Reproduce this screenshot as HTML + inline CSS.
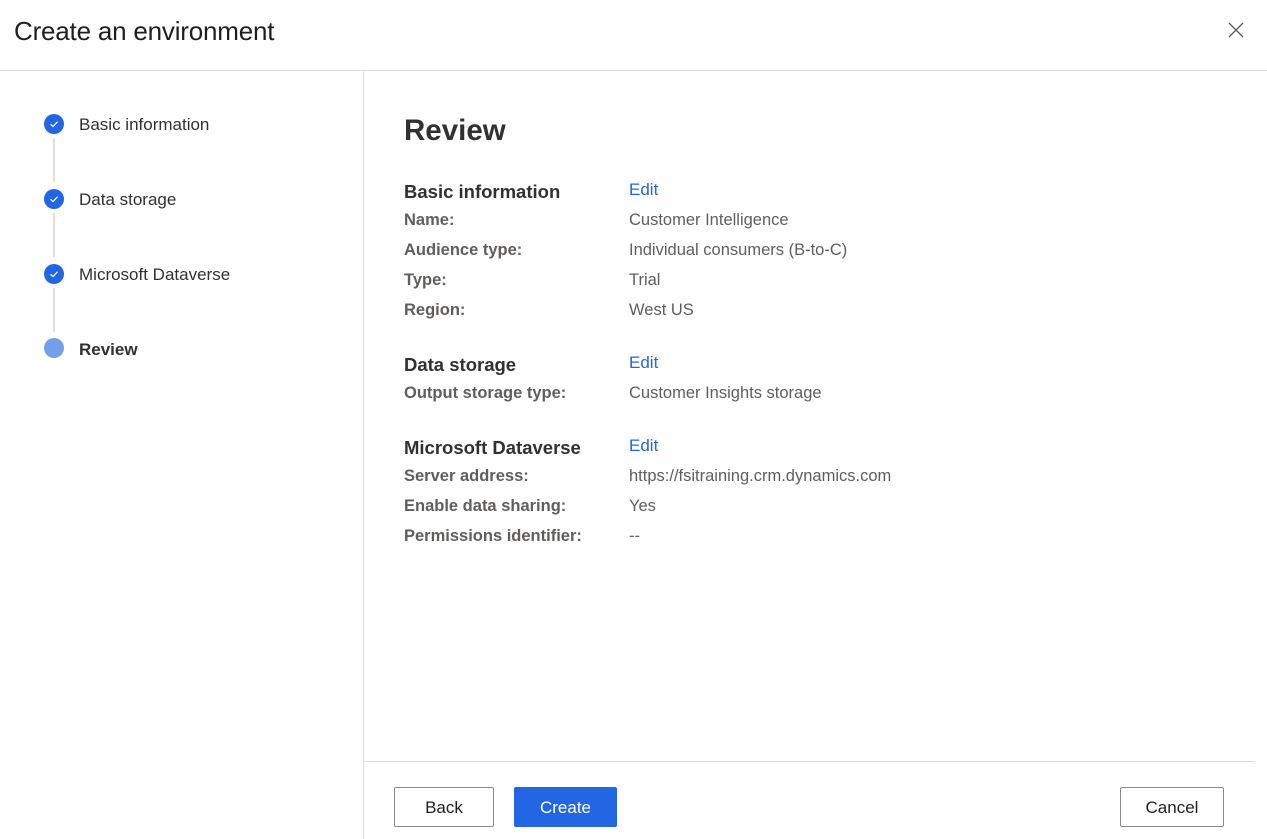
<!DOCTYPE html>
<html><head><meta charset="utf-8"><style>
*{margin:0;padding:0;box-sizing:border-box}
body{width:1267px;height:839px;background:#fff;font-family:"Liberation Sans",sans-serif;color:#323130;position:relative;overflow:hidden}
.a{position:absolute;white-space:nowrap}
h1{position:absolute;left:14px;top:16px;font-size:26px;font-weight:normal;color:#201f1e;letter-spacing:-0.2px}
.hl{position:absolute;left:0;top:70px;width:1267px;height:1px;background:#e1dfdd}
.vl{position:absolute;left:363px;top:71px;width:1px;height:768px;background:#e1dfdd}
.fl{position:absolute;left:364px;top:761px;width:891px;height:1px;background:#e1dfdd}
.dot{position:absolute;left:44px;width:20px;height:20px;border-radius:50%;background:#2266e3}
.conn{position:absolute;left:53px;width:2px;height:44px;background:#e1dfdd}
.step{position:absolute;left:79px;font-size:17px;color:#323130;margin-top:1px}
.lab{position:absolute;left:404px;font-size:16.5px;font-weight:bold;color:#605e5c;margin-top:1px}
.val{position:absolute;left:629px;font-size:16.5px;color:#605e5c;margin-top:1px}
.sec{position:absolute;left:404px;font-size:18.5px;font-weight:bold;color:#323130;margin-top:1px}
.edit{position:absolute;left:629px;font-size:17px;color:#2266e3;margin-top:1px}
.btn{position:absolute;top:787px;height:40px;border:1px solid #8a8886;border-radius:2px;font-size:17px;display:flex;align-items:center;justify-content:center;background:#fff;color:#201f1e;padding-top:2px}
</style></head><body>
<h1>Create an environment</h1>
<svg class="a" style="left:1228px;top:22px" width="16" height="16" viewBox="0 0 16 16"><path d="M1 1L15 15M15 1L1 15" stroke="#605e5c" stroke-width="1.3"/></svg>
<div class="hl"></div><div class="vl"></div><div class="fl"></div>

<div class="dot" style="top:114px"></div><svg class="a" style="left:48px;top:118px" width="12" height="12" viewBox="0 0 12 12"><path d="M2.5 6.2L5 8.5L9.5 3.8" stroke="#fff" stroke-width="1.2" fill="none"/></svg>
<div class="conn" style="top:138px"></div>
<div class="dot" style="top:189px"></div><svg class="a" style="left:48px;top:193px" width="12" height="12" viewBox="0 0 12 12"><path d="M2.5 6.2L5 8.5L9.5 3.8" stroke="#fff" stroke-width="1.2" fill="none"/></svg>
<div class="conn" style="top:213px"></div>
<div class="dot" style="top:264px"></div><svg class="a" style="left:48px;top:268px" width="12" height="12" viewBox="0 0 12 12"><path d="M2.5 6.2L5 8.5L9.5 3.8" stroke="#fff" stroke-width="1.2" fill="none"/></svg>
<div class="conn" style="top:288px"></div>
<div class="dot" style="top:338px;background:#739fe9"></div>
<div class="step" style="top:114px">Basic information</div>
<div class="step" style="top:189px">Data storage</div>
<div class="step" style="top:264px">Microsoft Dataverse</div>
<div class="step" style="top:339px;font-weight:bold">Review</div>

<div class="a" style="left:404px;top:114px;font-size:29.5px;font-weight:bold;color:#323130">Review</div>

<div class="sec" style="top:180px">Basic information</div><div class="edit" style="top:179px">Edit</div>
<div class="lab" style="top:210px">Name:</div><div class="val" style="top:210px">Customer Intelligence</div>
<div class="lab" style="top:240px">Audience type:</div><div class="val" style="top:240px">Individual consumers (B-to-C)</div>
<div class="lab" style="top:270px">Type:</div><div class="val" style="top:270px">Trial</div>
<div class="lab" style="top:300px">Region:</div><div class="val" style="top:300px">West US</div>

<div class="sec" style="top:353px">Data storage</div><div class="edit" style="top:352px">Edit</div>
<div class="lab" style="top:383px">Output storage type:</div><div class="val" style="top:383px">Customer Insights storage</div>

<div class="sec" style="top:436px">Microsoft Dataverse</div><div class="edit" style="top:435px">Edit</div>
<div class="lab" style="top:466px">Server address:</div><div class="val" style="top:466px">https://fsitraining.crm.dynamics.com</div>
<div class="lab" style="top:496px">Enable data sharing:</div><div class="val" style="top:496px">Yes</div>
<div class="lab" style="top:526px">Permissions identifier:</div><div class="val" style="top:526px">--</div>

<div class="btn" style="left:394px;width:100px">Back</div>
<div class="btn" style="left:514px;width:103px;background:#2266e3;border-color:#2266e3;color:#fff">Create</div>
<div class="btn" style="left:1120px;width:104px">Cancel</div>
</body></html>
